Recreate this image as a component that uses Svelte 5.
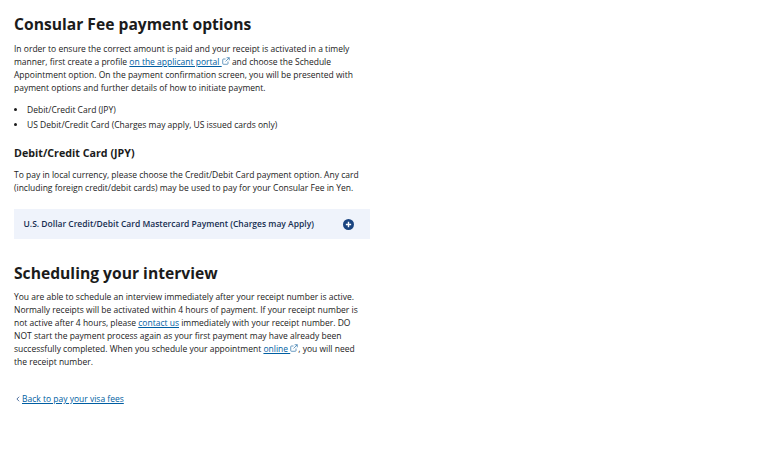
<script>
    const bullets = [
        "Debit/Credit Card (JPY)",
        "US Debit/Credit Card (Charges may apply, US issued cards only)",
    ];
</script>

{#snippet external()}
    <svg class="ext" viewBox="0 0 10 10" aria-hidden="true">
        <path d="M7.5 5.6v2.6a.9.9 0 0 1-.9.9H1.8a.9.9 0 0 1-.9-.9V3.4a.9.9 0 0 1 .9-.9h2.6" />
        <path d="M5.8.9h3.3v3.3M9.1.9 4.4 5.6" />
    </svg>
{/snippet}

<main class="content">
    <h1>Consular Fee payment options</h1>
    <p>
        In order to ensure the correct amount is paid and your receipt is activated in a timely
        manner, first create a profile <a href="#portal">on the applicant portal {@render external()}</a> and choose the Schedule
        Appointment option. On the payment confirmation screen, you will be presented with
        payment options and further details of how to initiate payment.
    </p>
    <ul>
        {#each bullets as item}
            <li>{item}</li>
        {/each}
    </ul>

    <h2>Debit/Credit Card (JPY)</h2>
    <p>
        To pay in local currency, please choose the Credit/Debit Card payment option. Any card
        (including foreign credit/debit cards) may be used to pay for your Consular Fee in Yen.
    </p>

    <div class="accordion">
        <span>U.S. Dollar Credit/Debit Card Mastercard Payment (Charges may Apply)</span>
        <svg class="plus" viewBox="0 0 10 10" aria-hidden="true">
            <circle cx="5" cy="5" r="5" />
            <path d="M5 2.6v4.8M2.6 5h4.8" />
        </svg>
    </div>

    <h1 class="second">Scheduling your interview</h1>
    <p>
        You are able to schedule an interview immediately after your receipt number is active.
        Normally receipts will be activated within 4 hours of payment. If your receipt number is
        not active after 4 hours, please <a href="#contact">contact us</a> immediately with your receipt number. DO
        NOT start the payment process again as your first payment may have already been
        successfully completed. When you schedule your appointment <a href="#online">online {@render external()}</a>, you will need
        the receipt number.
    </p>

    <div class="back">
        <svg class="chev" viewBox="0 0 5 8" aria-hidden="true"><path d="M4 1 1 4l3 3" /></svg>
        <a href="#back">Back to pay your visa fees</a>
    </div>
</main>

<style>
    :global(body) {
        background: #fff;
    }
    .content {
        width: 356px;
        padding: 13px 0 0 14px;
        font-family: "Open Sans", sans-serif;
        font-size: 8.5px;
        line-height: 13px;
        color: #1b1b1b;
    }
    h1 {
        margin: 0 0 6px;
        font-size: 15.65px;
        line-height: 23px;
        font-weight: 700;
    }
    h1.second {
        margin-top: 23px;
        margin-bottom: 5px;
    }
    h2 {
        margin: 15px 0 7px;
        font-size: 10.7px;
        line-height: 15px;
        font-weight: 700;
    }
    p {
        margin: 0;
        max-width: 350px;
    }
    ul {
        margin: 9px 0 0;
        padding: 0 0 0 13px;
    }
    li {
        margin-bottom: 2px;
    }
    a {
        color: #005ea2;
        text-decoration: underline;
    }
    .ext {
        width: 8px;
        height: 8px;
        fill: none;
        stroke: #2f74a8;
        stroke-width: 0.9;
    }
    .accordion {
        display: flex;
        align-items: center;
        justify-content: space-between;
        height: 30px;
        margin-top: 15px;
        padding: 0 16px 0 9.5px;
        background: #eff3fb;
        color: #162e51;
        font-size: 8.5px;
        font-weight: 600;
    }
    .accordion span {
        padding-bottom: 2px;
    }
    .plus {
        width: 11px;
        height: 11px;
    }
    .plus circle {
        fill: #1a4480;
    }
    .plus path {
        stroke: #fff;
        stroke-width: 1.3;
    }
    .back {
        display: flex;
        align-items: center;
        gap: 2px;
        margin-top: 24px;
        padding-left: 2px;
    }
    .chev {
        width: 4px;
        height: 6px;
        fill: none;
        stroke: #1a4480;
        stroke-width: 1;
    }
</style>
